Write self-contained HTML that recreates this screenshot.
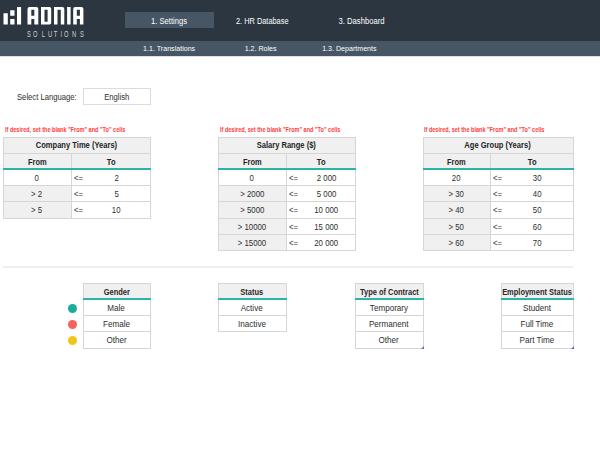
<!DOCTYPE html><html><head><meta charset="utf-8"><style>
*{margin:0;padding:0;box-sizing:border-box}
html,body{width:600px;height:462px;overflow:hidden;background:#fff;font-family:"Liberation Sans",sans-serif;color:#2e2e2e}
.ab{position:absolute}
.c{position:absolute;display:flex;align-items:center;justify-content:center;white-space:nowrap}
.s{display:inline-block;transform-origin:center;position:relative;top:0.8px}
.l{position:absolute;display:flex;align-items:center;white-space:nowrap}
.l .s{transform-origin:left center}
</style></head><body>
<div class="ab" style="left:0px;top:0px;width:600px;height:40.5px;background:#2c3640;"></div>
<div class="ab" style="left:0px;top:40.5px;width:600px;height:15.5px;background:#475664;"></div>
<div class="ab" style="left:0px;top:56px;width:600px;height:1px;background:#dfe2e5;"></div>
<svg class="ab" style="left:0;top:0" width="100" height="40" viewBox="0 0 100 40"><path fill="#fff" fill-rule="evenodd" d="M3.5 13.2H7.8V24.4H3.5Z M10.2 10.2H14.5V15.8H10.2Z M10.2 18.9H14.5V24.4H10.2Z M17 7.1H21.1V24.4H17Z M27.5 9Q27.5 7 29.5 7H36.3Q38.3 7 38.3 9V24.5H34.3V19H31.3V24.5H27.5Z M31.3 9.8V15.8H34.3V9.8Z M41 7H49.4Q51.2 7 51.2 8.8V22.7Q51.2 24.5 49.4 24.5H41Z M44.5 9.8V21.7H47.6V9.8Z M54 7H62.3Q64.3 7 64.3 9V24.5H60.8V9.8H57.5V24.5H54Z M67.1 7H70.6V24.5H67.1Z M73.2 9Q73.2 7 75.2 7H81.4Q83.4 7 83.4 9V24.5H79.9V19H76.8V24.5H73.2Z M76.8 9.8V15.8H79.9V9.8Z"/></svg>
<div class="c" style="left:23.9px;top:28.5px;width:10px;height:9px;font-size:8.6px;color:#cdd1d5"><span class="s" style="transform:scaleX(0.68)">S</span></div>
<div class="c" style="left:30.799999999999997px;top:28.5px;width:10px;height:9px;font-size:8.6px;color:#cdd1d5"><span class="s" style="transform:scaleX(0.68)">O</span></div>
<div class="c" style="left:37.9px;top:28.5px;width:10px;height:9px;font-size:8.6px;color:#cdd1d5"><span class="s" style="transform:scaleX(0.68)">L</span></div>
<div class="c" style="left:44.9px;top:28.5px;width:10px;height:9px;font-size:8.6px;color:#cdd1d5"><span class="s" style="transform:scaleX(0.68)">U</span></div>
<div class="c" style="left:51.0px;top:28.5px;width:10px;height:9px;font-size:8.6px;color:#cdd1d5"><span class="s" style="transform:scaleX(0.68)">T</span></div>
<div class="c" style="left:56.2px;top:28.5px;width:10px;height:9px;font-size:8.6px;color:#cdd1d5"><span class="s" style="transform:scaleX(0.68)">I</span></div>
<div class="c" style="left:61.75px;top:28.5px;width:10px;height:9px;font-size:8.6px;color:#cdd1d5"><span class="s" style="transform:scaleX(0.68)">O</span></div>
<div class="c" style="left:69.6px;top:28.5px;width:10px;height:9px;font-size:8.6px;color:#cdd1d5"><span class="s" style="transform:scaleX(0.68)">N</span></div>
<div class="c" style="left:76.8px;top:28.5px;width:10px;height:9px;font-size:8.6px;color:#cdd1d5"><span class="s" style="transform:scaleX(0.68)">S</span></div>
<div class="ab" style="left:124.5px;top:12px;width:89.5px;height:16px;background:#475664;"></div>
<div class="c" style="left:124.5px;top:12px;width:89.5px;height:16px;font-size:8.5px;color:#fff;"><span class="s" style="transform:scaleX(0.9);top:0.8px">1. Settings</span></div>
<div class="c" style="left:220px;top:12px;width:84px;height:16px;font-size:8.5px;color:#fff;"><span class="s" style="transform:scaleX(0.87);top:0.8px">2. HR Database</span></div>
<div class="c" style="left:320px;top:12px;width:84px;height:16px;font-size:8.5px;color:#fff;"><span class="s" style="transform:scaleX(0.9);top:0.8px">3. Dashboard</span></div>
<div class="c" style="left:124.5px;top:40.6px;width:89.5px;height:15px;font-size:7.4px;color:#fff;"><span class="s" style="transform:scaleX(0.96);top:0.8px">1.1. Translations</span></div>
<div class="c" style="left:220px;top:40.6px;width:82px;height:15px;font-size:7.4px;color:#fff;"><span class="s" style="transform:scaleX(0.96);top:0.8px">1.2. Roles</span></div>
<div class="c" style="left:308px;top:40.6px;width:82px;height:15px;font-size:7.4px;color:#fff;"><span class="s" style="transform:scaleX(0.96);top:0.8px">1.3. Departments</span></div>
<div class="l" style="left:16.5px;top:88px;width:61px;height:16px;font-size:9.6px;"><span class="s" style="transform:scaleX(0.8);top:0.8px">Select Language:</span></div>
<div class="ab" style="left:83px;top:88px;width:68px;height:17px;border:1px solid #dcdcdc"></div>
<div class="c" style="left:83px;top:87.5px;width:68px;height:17px;font-size:9.6px;"><span class="s" style="transform:scaleX(0.8);top:0.8px">English</span></div>
<div class="l" style="left:4.5px;top:124.6px;width:140px;height:8px;font-size:7px;font-weight:bold;color:#ff3b3b;"><span class="s" style="transform:scaleX(0.79);top:0.8px">If desired, set the blank "From" and "To" cells</span></div>
<div class="ab" style="left:3px;top:137px;width:147px;height:32px;background:#f0f0f0;"></div>
<div class="ab" style="left:3px;top:185px;width:68px;height:33px;background:#f0f0f0;"></div>
<div class="ab" style="left:3px;top:137px;width:148px;height:82px;border:1px solid #d6d6d6"></div>
<div class="ab" style="left:71px;top:153px;width:1px;height:65px;background:#d6d6d6;"></div>
<div class="ab" style="left:3px;top:153px;width:147px;height:1px;background:#d6d6d6;"></div>
<div class="ab" style="left:3px;top:185px;width:147px;height:1px;background:#d6d6d6;"></div>
<div class="ab" style="left:3px;top:201px;width:147px;height:1px;background:#d6d6d6;"></div>
<div class="ab" style="left:3px;top:168px;width:148px;height:2px;background:#2ab5a6;"></div>
<div class="c" style="left:3px;top:137px;width:147px;height:16px;font-size:9px;font-weight:bold;color:#222;"><span class="s" style="transform:scaleX(0.84);top:-0.2px">Company Time (Years)</span></div>
<div class="c" style="left:3px;top:153px;width:68px;height:16px;font-size:9px;font-weight:bold;color:#262626;"><span class="s" style="transform:scaleX(0.83);top:0.8px">From</span></div>
<div class="c" style="left:72px;top:153px;width:79px;height:16px;font-size:9px;font-weight:bold;color:#222;"><span class="s" style="transform:scaleX(0.84);top:0.8px">To</span></div>
<div class="c" style="left:3px;top:169px;width:68px;height:16px;font-size:9.3px;"><span class="s" style="transform:scaleX(0.84);top:0.8px">0</span></div>
<div class="l" style="left:73.5px;top:169px;width:20px;height:16px;font-size:9px;"><span class="s" style="transform:scaleX(0.85);top:0.8px">&lt;=</span></div>
<div class="c" style="left:86.5px;top:169px;width:60px;height:16px;font-size:9.3px;"><span class="s" style="transform:scaleX(0.84);top:0.8px">2</span></div>
<div class="c" style="left:3px;top:185px;width:68px;height:16px;font-size:9.3px;"><span class="s" style="transform:scaleX(0.84);top:0.8px">&gt; 2</span></div>
<div class="l" style="left:73.5px;top:185px;width:20px;height:16px;font-size:9px;"><span class="s" style="transform:scaleX(0.85);top:0.8px">&lt;=</span></div>
<div class="c" style="left:86.5px;top:185px;width:60px;height:16px;font-size:9.3px;"><span class="s" style="transform:scaleX(0.84);top:0.8px">5</span></div>
<div class="c" style="left:3px;top:201px;width:68px;height:17px;font-size:9.3px;"><span class="s" style="transform:scaleX(0.84);top:0.8px">&gt; 5</span></div>
<div class="l" style="left:73.5px;top:201px;width:20px;height:17px;font-size:9px;"><span class="s" style="transform:scaleX(0.85);top:0.8px">&lt;=</span></div>
<div class="c" style="left:86.5px;top:201px;width:60px;height:17px;font-size:9.3px;"><span class="s" style="transform:scaleX(0.84);top:0.8px">10</span></div>
<div class="l" style="left:219.5px;top:124.6px;width:140px;height:8px;font-size:7px;font-weight:bold;color:#ff3b3b;"><span class="s" style="transform:scaleX(0.79);top:0.8px">If desired, set the blank "From" and "To" cells</span></div>
<div class="ab" style="left:218px;top:137px;width:137px;height:32px;background:#f0f0f0;"></div>
<div class="ab" style="left:218px;top:185px;width:68px;height:65px;background:#f0f0f0;"></div>
<div class="ab" style="left:218px;top:137px;width:138px;height:114px;border:1px solid #d6d6d6"></div>
<div class="ab" style="left:286px;top:153px;width:1px;height:97px;background:#d6d6d6;"></div>
<div class="ab" style="left:218px;top:153px;width:137px;height:1px;background:#d6d6d6;"></div>
<div class="ab" style="left:218px;top:185px;width:137px;height:1px;background:#d6d6d6;"></div>
<div class="ab" style="left:218px;top:201px;width:137px;height:1px;background:#d6d6d6;"></div>
<div class="ab" style="left:218px;top:218px;width:137px;height:1px;background:#d6d6d6;"></div>
<div class="ab" style="left:218px;top:234px;width:137px;height:1px;background:#d6d6d6;"></div>
<div class="ab" style="left:218px;top:168px;width:138px;height:2px;background:#2ab5a6;"></div>
<div class="c" style="left:218px;top:137px;width:137px;height:16px;font-size:9px;font-weight:bold;color:#222;"><span class="s" style="transform:scaleX(0.84);top:-0.2px">Salary Range ($)</span></div>
<div class="c" style="left:218px;top:153px;width:68px;height:16px;font-size:9px;font-weight:bold;color:#262626;"><span class="s" style="transform:scaleX(0.83);top:0.8px">From</span></div>
<div class="c" style="left:287px;top:153px;width:69px;height:16px;font-size:9px;font-weight:bold;color:#222;"><span class="s" style="transform:scaleX(0.84);top:0.8px">To</span></div>
<div class="c" style="left:218px;top:169px;width:68px;height:16px;font-size:9.3px;"><span class="s" style="transform:scaleX(0.84);top:0.8px">0</span></div>
<div class="l" style="left:288.5px;top:169px;width:20px;height:16px;font-size:9px;"><span class="s" style="transform:scaleX(0.85);top:0.8px">&lt;=</span></div>
<div class="c" style="left:296.5px;top:169px;width:60px;height:16px;font-size:9.3px;"><span class="s" style="transform:scaleX(0.84);top:0.8px">2 000</span></div>
<div class="c" style="left:218px;top:185px;width:68px;height:16px;font-size:9.3px;"><span class="s" style="transform:scaleX(0.84);top:0.8px">&gt; 2000</span></div>
<div class="l" style="left:288.5px;top:185px;width:20px;height:16px;font-size:9px;"><span class="s" style="transform:scaleX(0.85);top:0.8px">&lt;=</span></div>
<div class="c" style="left:296.5px;top:185px;width:60px;height:16px;font-size:9.3px;"><span class="s" style="transform:scaleX(0.84);top:0.8px">5 000</span></div>
<div class="c" style="left:218px;top:201px;width:68px;height:17px;font-size:9.3px;"><span class="s" style="transform:scaleX(0.84);top:0.8px">&gt; 5000</span></div>
<div class="l" style="left:288.5px;top:201px;width:20px;height:17px;font-size:9px;"><span class="s" style="transform:scaleX(0.85);top:0.8px">&lt;=</span></div>
<div class="c" style="left:296.5px;top:201px;width:60px;height:17px;font-size:9.3px;"><span class="s" style="transform:scaleX(0.84);top:0.8px">10 000</span></div>
<div class="c" style="left:218px;top:218px;width:68px;height:16px;font-size:9.3px;"><span class="s" style="transform:scaleX(0.84);top:0.8px">&gt; 10000</span></div>
<div class="l" style="left:288.5px;top:218px;width:20px;height:16px;font-size:9px;"><span class="s" style="transform:scaleX(0.85);top:0.8px">&lt;=</span></div>
<div class="c" style="left:296.5px;top:218px;width:60px;height:16px;font-size:9.3px;"><span class="s" style="transform:scaleX(0.84);top:0.8px">15 000</span></div>
<div class="c" style="left:218px;top:234px;width:68px;height:16px;font-size:9.3px;"><span class="s" style="transform:scaleX(0.84);top:0.8px">&gt; 15000</span></div>
<div class="l" style="left:288.5px;top:234px;width:20px;height:16px;font-size:9px;"><span class="s" style="transform:scaleX(0.85);top:0.8px">&lt;=</span></div>
<div class="c" style="left:296.5px;top:234px;width:60px;height:16px;font-size:9.3px;"><span class="s" style="transform:scaleX(0.84);top:0.8px">20 000</span></div>
<div class="l" style="left:424px;top:124.6px;width:140px;height:8px;font-size:7px;font-weight:bold;color:#ff3b3b;"><span class="s" style="transform:scaleX(0.79);top:0.8px">If desired, set the blank "From" and "To" cells</span></div>
<div class="ab" style="left:423px;top:137px;width:150px;height:32px;background:#f0f0f0;"></div>
<div class="ab" style="left:423px;top:185px;width:67px;height:65px;background:#f0f0f0;"></div>
<div class="ab" style="left:423px;top:137px;width:151px;height:114px;border:1px solid #d6d6d6"></div>
<div class="ab" style="left:490px;top:153px;width:1px;height:97px;background:#d6d6d6;"></div>
<div class="ab" style="left:423px;top:153px;width:150px;height:1px;background:#d6d6d6;"></div>
<div class="ab" style="left:423px;top:185px;width:150px;height:1px;background:#d6d6d6;"></div>
<div class="ab" style="left:423px;top:201px;width:150px;height:1px;background:#d6d6d6;"></div>
<div class="ab" style="left:423px;top:218px;width:150px;height:1px;background:#d6d6d6;"></div>
<div class="ab" style="left:423px;top:234px;width:150px;height:1px;background:#d6d6d6;"></div>
<div class="ab" style="left:423px;top:168px;width:151px;height:2px;background:#2ab5a6;"></div>
<div class="c" style="left:423px;top:137px;width:150px;height:16px;font-size:9px;font-weight:bold;color:#222;"><span class="s" style="transform:scaleX(0.84);top:-0.2px">Age Group (Years)</span></div>
<div class="c" style="left:423px;top:153px;width:67px;height:16px;font-size:9px;font-weight:bold;color:#262626;"><span class="s" style="transform:scaleX(0.83);top:0.8px">From</span></div>
<div class="c" style="left:491px;top:153px;width:83px;height:16px;font-size:9px;font-weight:bold;color:#222;"><span class="s" style="transform:scaleX(0.84);top:0.8px">To</span></div>
<div class="c" style="left:423px;top:169px;width:67px;height:16px;font-size:9.3px;"><span class="s" style="transform:scaleX(0.84);top:0.8px">20</span></div>
<div class="l" style="left:492.5px;top:169px;width:20px;height:16px;font-size:9px;"><span class="s" style="transform:scaleX(0.85);top:0.8px">&lt;=</span></div>
<div class="c" style="left:507.5px;top:169px;width:60px;height:16px;font-size:9.3px;"><span class="s" style="transform:scaleX(0.84);top:0.8px">30</span></div>
<div class="c" style="left:423px;top:185px;width:67px;height:16px;font-size:9.3px;"><span class="s" style="transform:scaleX(0.84);top:0.8px">&gt; 30</span></div>
<div class="l" style="left:492.5px;top:185px;width:20px;height:16px;font-size:9px;"><span class="s" style="transform:scaleX(0.85);top:0.8px">&lt;=</span></div>
<div class="c" style="left:507.5px;top:185px;width:60px;height:16px;font-size:9.3px;"><span class="s" style="transform:scaleX(0.84);top:0.8px">40</span></div>
<div class="c" style="left:423px;top:201px;width:67px;height:17px;font-size:9.3px;"><span class="s" style="transform:scaleX(0.84);top:0.8px">&gt; 40</span></div>
<div class="l" style="left:492.5px;top:201px;width:20px;height:17px;font-size:9px;"><span class="s" style="transform:scaleX(0.85);top:0.8px">&lt;=</span></div>
<div class="c" style="left:507.5px;top:201px;width:60px;height:17px;font-size:9.3px;"><span class="s" style="transform:scaleX(0.84);top:0.8px">50</span></div>
<div class="c" style="left:423px;top:218px;width:67px;height:16px;font-size:9.3px;"><span class="s" style="transform:scaleX(0.84);top:0.8px">&gt; 50</span></div>
<div class="l" style="left:492.5px;top:218px;width:20px;height:16px;font-size:9px;"><span class="s" style="transform:scaleX(0.85);top:0.8px">&lt;=</span></div>
<div class="c" style="left:507.5px;top:218px;width:60px;height:16px;font-size:9.3px;"><span class="s" style="transform:scaleX(0.84);top:0.8px">60</span></div>
<div class="c" style="left:423px;top:234px;width:67px;height:16px;font-size:9.3px;"><span class="s" style="transform:scaleX(0.84);top:0.8px">&gt; 60</span></div>
<div class="l" style="left:492.5px;top:234px;width:20px;height:16px;font-size:9px;"><span class="s" style="transform:scaleX(0.85);top:0.8px">&lt;=</span></div>
<div class="c" style="left:507.5px;top:234px;width:60px;height:16px;font-size:9.3px;"><span class="s" style="transform:scaleX(0.84);top:0.8px">70</span></div>
<div class="ab" style="left:3px;top:266px;width:570px;height:2px;background:#efefef;"></div>
<div class="ab" style="left:83px;top:283px;width:67px;height:16px;background:#f0f0f0;"></div>
<div class="ab" style="left:83px;top:283px;width:68px;height:66px;border:1px solid #d6d6d6"></div>
<div class="ab" style="left:83px;top:315px;width:67px;height:1px;background:#d6d6d6;"></div>
<div class="ab" style="left:83px;top:331px;width:67px;height:1px;background:#d6d6d6;"></div>
<div class="ab" style="left:83px;top:298px;width:68px;height:2px;background:#2ab5a6;"></div>
<div class="c" style="left:83px;top:283px;width:67px;height:16px;font-size:9px;font-weight:bold;color:#262626;"><span class="s" style="transform:scaleX(0.83);top:0.8px">Gender</span></div>
<div class="c" style="left:83px;top:299px;width:67px;height:16px;font-size:9.3px;"><span class="s" style="transform:scaleX(0.87);top:0.8px">Male</span></div>
<div class="c" style="left:83px;top:315px;width:67px;height:16px;font-size:9.3px;"><span class="s" style="transform:scaleX(0.87);top:0.8px">Female</span></div>
<div class="c" style="left:83px;top:331px;width:67px;height:17px;font-size:9.3px;"><span class="s" style="transform:scaleX(0.87);top:0.8px">Other</span></div>
<div class="ab" style="left:218px;top:283px;width:68px;height:16px;background:#f0f0f0;"></div>
<div class="ab" style="left:218px;top:283px;width:69px;height:49px;border:1px solid #d6d6d6"></div>
<div class="ab" style="left:218px;top:315px;width:68px;height:1px;background:#d6d6d6;"></div>
<div class="ab" style="left:218px;top:298px;width:69px;height:2px;background:#2ab5a6;"></div>
<div class="c" style="left:218px;top:283px;width:68px;height:16px;font-size:9px;font-weight:bold;color:#262626;"><span class="s" style="transform:scaleX(0.83);top:0.8px">Status</span></div>
<div class="c" style="left:218px;top:299px;width:68px;height:16px;font-size:9.3px;"><span class="s" style="transform:scaleX(0.87);top:0.8px">Active</span></div>
<div class="c" style="left:218px;top:315px;width:68px;height:16px;font-size:9.3px;"><span class="s" style="transform:scaleX(0.87);top:0.8px">Inactive</span></div>
<div class="ab" style="left:355px;top:283px;width:68px;height:16px;background:#f0f0f0;"></div>
<div class="ab" style="left:355px;top:283px;width:69px;height:66px;border:1px solid #d6d6d6"></div>
<div class="ab" style="left:355px;top:315px;width:68px;height:1px;background:#d6d6d6;"></div>
<div class="ab" style="left:355px;top:331px;width:68px;height:1px;background:#d6d6d6;"></div>
<div class="ab" style="left:355px;top:298px;width:69px;height:2px;background:#2ab5a6;"></div>
<div class="c" style="left:355px;top:283px;width:68px;height:16px;font-size:9px;font-weight:bold;color:#262626;"><span class="s" style="transform:scaleX(0.83);top:0.8px">Type of Contract</span></div>
<div class="c" style="left:355px;top:299px;width:68px;height:16px;font-size:9.3px;"><span class="s" style="transform:scaleX(0.87);top:0.8px">Temporary</span></div>
<div class="c" style="left:355px;top:315px;width:68px;height:16px;font-size:9.3px;"><span class="s" style="transform:scaleX(0.87);top:0.8px">Permanent</span></div>
<div class="c" style="left:355px;top:331px;width:68px;height:17px;font-size:9.3px;"><span class="s" style="transform:scaleX(0.87);top:0.8px">Other</span></div>
<div class="ab" style="left:420.5px;top:345.5px;width:0;height:0;border-left:3px solid transparent;border-bottom:3px solid #4a6fd0"></div>
<div class="ab" style="left:501px;top:283px;width:72px;height:16px;background:#f0f0f0;"></div>
<div class="ab" style="left:501px;top:283px;width:73px;height:66px;border:1px solid #d6d6d6"></div>
<div class="ab" style="left:501px;top:315px;width:72px;height:1px;background:#d6d6d6;"></div>
<div class="ab" style="left:501px;top:331px;width:72px;height:1px;background:#d6d6d6;"></div>
<div class="ab" style="left:501px;top:298px;width:73px;height:2px;background:#2ab5a6;"></div>
<div class="c" style="left:501px;top:283px;width:72px;height:16px;font-size:9px;font-weight:bold;color:#262626;"><span class="s" style="transform:scaleX(0.83);top:0.8px">Employment Status</span></div>
<div class="c" style="left:501px;top:299px;width:72px;height:16px;font-size:9.3px;"><span class="s" style="transform:scaleX(0.87);top:0.8px">Student</span></div>
<div class="c" style="left:501px;top:315px;width:72px;height:16px;font-size:9.3px;"><span class="s" style="transform:scaleX(0.87);top:0.8px">Full Time</span></div>
<div class="c" style="left:501px;top:331px;width:72px;height:17px;font-size:9.3px;"><span class="s" style="transform:scaleX(0.87);top:0.8px">Part Time</span></div>
<div class="ab" style="left:570.5px;top:345.5px;width:0;height:0;border-left:3px solid transparent;border-bottom:3px solid #4a6fd0"></div>
<div class="ab" style="left:67.60000000000001px;top:304.09999999999997px;width:9.2px;height:9.2px;border-radius:50%;background:#17ad9a"></div>
<div class="ab" style="left:67.60000000000001px;top:320.2px;width:9.2px;height:9.2px;border-radius:50%;background:#f6615b"></div>
<div class="ab" style="left:67.60000000000001px;top:336.2px;width:9.2px;height:9.2px;border-radius:50%;background:#f3c418"></div>
</body></html>
